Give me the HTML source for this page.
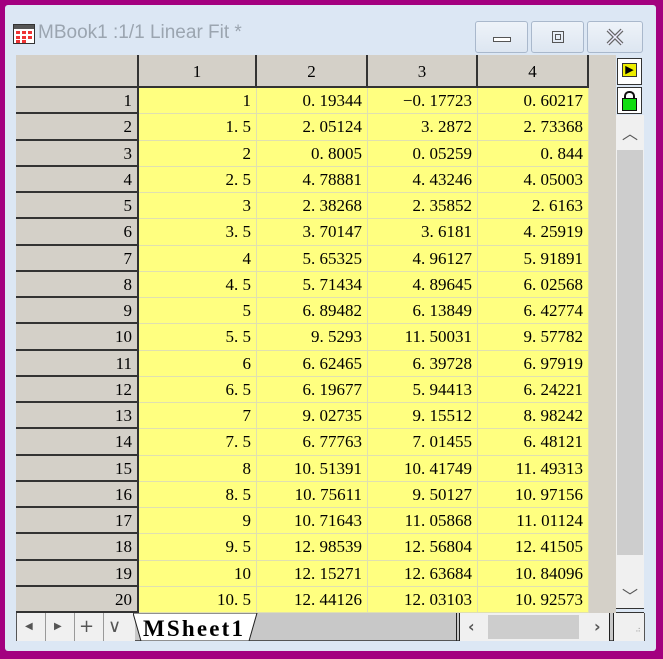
<!DOCTYPE html>
<html><head><style>
*{margin:0;padding:0;box-sizing:border-box}
body{width:663px;height:659px;background:#a3007f;position:relative;overflow:hidden;font-family:"Liberation Serif","Noto Serif CJK SC",serif}
.frame{position:absolute;left:5px;top:5px;width:651px;height:646px;background:#dce7f4;border-radius:3px}
.title{position:absolute;left:38px;top:22px;font:19px "Liberation Sans",sans-serif;color:#9ba5b0}
.btn{position:absolute;top:21px;height:32px;border:1px solid #a9b8cc;border-radius:3px;background:linear-gradient(#eef3f9,#dde6f1)}
.grid{position:absolute;left:16px;top:55px;width:573px;height:558px;background:#d4d0c8}
.c{position:absolute;font-size:17px;text-align:right;padding-right:5px;line-height:26px;white-space:pre}
.y{background:#ffff80;border-right:1px solid #e0e0b0;border-bottom:1px solid #e0e0b0}
.h{background:#d4d0c8;border-right:2px solid #333;border-bottom:2px solid #333}
.panel{position:absolute;left:589px;top:55px;width:27px;height:558px;background:#d4d0c8}
.vs{position:absolute;left:616px;top:115px;width:28px;height:493px;background:#f0f0f0}
.tab{position:absolute;top:613px;height:28px}
</style></head><body>
<div class="frame"></div>
<svg style="position:absolute;left:13px;top:24px" width="22" height="20"><rect x="0.5" y="0.5" width="21" height="19" fill="#fff" stroke="#333"/><rect x="1" y="1" width="20" height="4" fill="#555"/><g fill="#e33"><rect x="3" y="7" width="4" height="3"/><rect x="9" y="7" width="4" height="3"/><rect x="15" y="7" width="4" height="3"/><rect x="3" y="12" width="4" height="3"/><rect x="9" y="12" width="4" height="3"/><rect x="15" y="12" width="4" height="3"/><rect x="3" y="16" width="4" height="3"/><rect x="9" y="16" width="4" height="3"/></g></svg>
<div class="title">MBook1 :1/1 Linear Fit *</div>
<div class="btn" style="left:475px;width:53px"><div style="position:absolute;left:17px;top:15px;width:18px;height:5px;border:1px solid #555;background:#fff"></div></div>
<div class="btn" style="left:531px;width:53px"><div style="position:absolute;left:20px;top:9px;width:12px;height:12px;border:1px solid #555"><div style="margin:2px;width:6px;height:6px;border:1px solid #555"></div></div></div>
<div class="btn" style="left:587px;width:56px"><svg width="54" height="30"><path d="M20 8 L34 22 M34 8 L20 22" stroke="#666" stroke-width="4"/><path d="M20 8 L34 22 M34 8 L20 22" stroke="#eef" stroke-width="1.5"/></svg></div>
<div class="grid" id="g"></div>
<div class="panel"></div>
<div style="position:absolute;left:617px;top:58px;width:25px;height:27px;background:#fff;border:1px solid #333"><div style="margin:4px 4px;width:15px;height:14px;background:#ee0;border:1px solid #333;font:bold 11px 'DejaVu Sans';line-height:12px;text-align:center">▶</div></div>
<div style="position:absolute;left:617px;top:87px;width:25px;height:27px;background:#fff;border:1px solid #333;overflow:hidden"><div style="position:absolute;left:6px;top:3px;width:11px;height:9px;border:2px solid #111;border-bottom:none;border-radius:5px 5px 0 0"></div><div style="position:absolute;left:4px;top:10px;width:15px;height:13px;background:#1d1;border:1px solid #111"></div></div>
<div class="vs"><div style="position:absolute;top:5px;width:28px;text-align:center;font:16px 'DejaVu Sans';color:#555">︿</div><div style="position:absolute;left:1px;top:35px;width:26px;height:405px;background:#cdcdcd"></div><div style="position:absolute;top:468px;width:28px;text-align:center;font:16px 'DejaVu Sans';color:#555">﹀</div></div>
<div style="position:absolute;left:616px;top:608px;width:28px;height:5px;border-top:1px solid #333;border-bottom:1px solid #333"></div>
<div class="tab" style="left:16px;width:629px;background:#c8c8c8;border:1px solid #555;border-top:none"></div>
<div class="tab" style="left:17px;width:118px;background:#f0f0f0"></div>
<div class="tab" style="left:45px;width:1px;background:#999"></div><div class="tab" style="left:74px;width:1px;background:#999"></div><div class="tab" style="left:103px;width:1px;background:#999"></div>
<div class="tab" style="left:17px;width:118px;font:18px 'DejaVu Sans';color:#555;line-height:28px"><span style="position:absolute;left:8px;font-size:10px">◀</span><span style="position:absolute;left:37px;font-size:10px">▶</span><span style="position:absolute;left:62px">+</span><span style="position:absolute;left:91px">∨</span></div>
<svg class="tab" style="left:133px" width="130" height="28"><path d="M0 0 L8 28 L116 28 L124 0Z" fill="#fff" stroke="#222"/><text x="10" y="23" font-family="Liberation Serif,serif" font-weight="bold" font-size="23" textLength="100">MSheet1</text></svg>
<div class="tab" style="left:456px;width:4px;border-left:1px solid #222;border-right:1px solid #222"></div>
<div class="tab" style="left:460px;width:150px;background:#f0f0f0;font:bold 16px 'DejaVu Sans';color:#555;line-height:28px"><span style="position:absolute;left:8px">‹</span><div style="position:absolute;left:28px;top:2px;width:91px;height:24px;background:#cdcdcd"></div><span style="position:absolute;left:134px">›</span></div>
<div class="tab" style="left:609px;width:5px;border-left:1px solid #222;border-right:1px solid #222"></div>
<div class="tab" style="left:614px;width:30px;background:#f0f0f0;font:8px sans-serif;color:#aaa;text-align:right;padding:12px 3px 0 0">⠴</div>
<script>
var d=[["1","0. 19344","−0. 17723","0. 60217"],["1. 5","2. 05124","3. 2872","2. 73368"],["2","0. 8005","0. 05259","0. 844"],["2. 5","4. 78881","4. 43246","4. 05003"],["3","2. 38268","2. 35852","2. 6163"],["3. 5","3. 70147","3. 6181","4. 25919"],["4","5. 65325","4. 96127","5. 91891"],["4. 5","5. 71434","4. 89645","6. 02568"],["5","6. 89482","6. 13849","6. 42774"],["5. 5","9. 5293","11. 50031","9. 57782"],["6","6. 62465","6. 39728","6. 97919"],["6. 5","6. 19677","5. 94413","6. 24221"],["7","9. 02735","9. 15512","8. 98242"],["7. 5","6. 77763","7. 01455","6. 48121"],["8","10. 51391","10. 41749","11. 49313"],["8. 5","10. 75611","9. 50127","10. 97156"],["9","10. 71643","11. 05868","11. 01124"],["9. 5","12. 98539","12. 56804","12. 41505"],["10","12. 15271","12. 63684","10. 84096"],["10. 5","12. 44126","12. 03103","10. 92573"]];
var x=[0,123,241,352,462,573],h='';
for(var j=0;j<5;j++)h+='<div class="c h" style="left:'+x[j]+'px;top:0;width:'+(x[j+1]-x[j])+'px;height:33px;line-height:33px;text-align:center;padding:0">'+(j?j:'')+'</div>';
for(var i=0;i<20;i++){var t=Math.round(33+i*26.25),b=Math.round(33+(i+1)*26.25);
h+='<div class="c h" style="left:0;top:'+t+'px;width:123px;height:'+(b-t)+'px">'+(i+1)+'</div>';
for(j=0;j<4;j++)h+='<div class="c y" style="left:'+x[j+1]+'px;top:'+t+'px;width:'+(x[j+2]-x[j+1])+'px;height:'+(b-t)+'px">'+d[i][j]+'</div>';}
document.getElementById('g').innerHTML=h;
</script>
</body></html>
